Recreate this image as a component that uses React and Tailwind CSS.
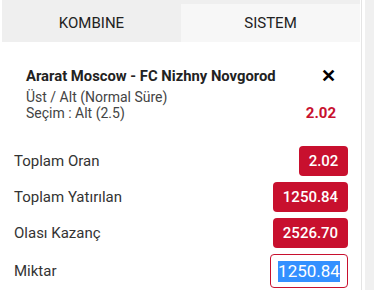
import { useState } from 'react';

const rows = [
  { label: 'Toplam Oran', value: '2.02', w: 'w-[49px]' },
  { label: 'Toplam Yatırılan', value: '1250.84', w: 'w-[75px]' },
  { label: 'Olası Kazanç', value: '2526.70', w: 'w-[75px]' },
];

const App = () => {
  const [tab] = useState('sistem');

  return (
    <div className="w-[379px] h-[290px] bg-white flex overflow-hidden font-['Roboto',sans-serif] text-[#333]">
      <div className="w-[362px] shrink-0 pl-[2px] pr-[1px] border-r border-[#e4e4e4]">
        {/* tabs */}
        <div className="flex h-[42px] bg-[#efefef] text-[15px]">
          <div className="flex-1 flex items-center justify-center pt-[4px] text-[#222]">KOMBINE</div>
          <div
            className={`flex-1 flex items-center justify-center mt-[4px] text-[#222] ${
              tab === 'sistem' ? 'bg-[#f7f7f7]' : ''
            }`}
          >
            SISTEM
          </div>
        </div>

        {/* selected match */}
        <div className="px-6 pt-[25px] pb-[25px]">
          <div className="flex items-center justify-between">
            <span className="font-bold text-[14.8px] leading-[18px] text-[#222]">
              Ararat Moscow - FC Nizhny Novgorod
            </span>
            <span className="font-bold text-[18px] leading-[18px] text-black">✕</span>
          </div>
          <div className="mt-[4px] text-[14px] leading-[16px] text-[#444]">Üst / Alt (Normal Süre)</div>
          <div className="flex items-center justify-between text-[14px] leading-[16px]">
            <span className="text-[#444]">Seçim : Alt (2.5)</span>
            <span className="font-bold text-[15px] text-[#c8102e]">2.02</span>
          </div>
        </div>

        {/* totals */}
        <div className="px-3">
          {rows.map((r) => (
            <div key={r.label} className="flex items-center justify-between mb-[6px]">
              <span className="text-[15px] text-[#333]">{r.label}</span>
              <span
                className={`${r.w} h-[30px] rounded-[4px] bg-[#c8102e] text-white text-[15px] font-medium flex items-center justify-center`}
              >
                {r.value}
              </span>
            </div>
          ))}
          <div className="flex items-center justify-between">
            <span className="text-[15px] text-[#333]">Miktar</span>
            <span className="w-[78px] h-[34px] rounded-[4px] border border-[#c8102e] flex items-center justify-center">
              <span className="bg-[#3390ff] text-white text-[17px] leading-[21px]">1250.84</span>
            </span>
          </div>
        </div>
      </div>
      <div className="w-[3px] shrink-0" />
      <div className="w-[9px] shrink-0 bg-[#f0f0f0]" />
    </div>
  );
};

export default App;
